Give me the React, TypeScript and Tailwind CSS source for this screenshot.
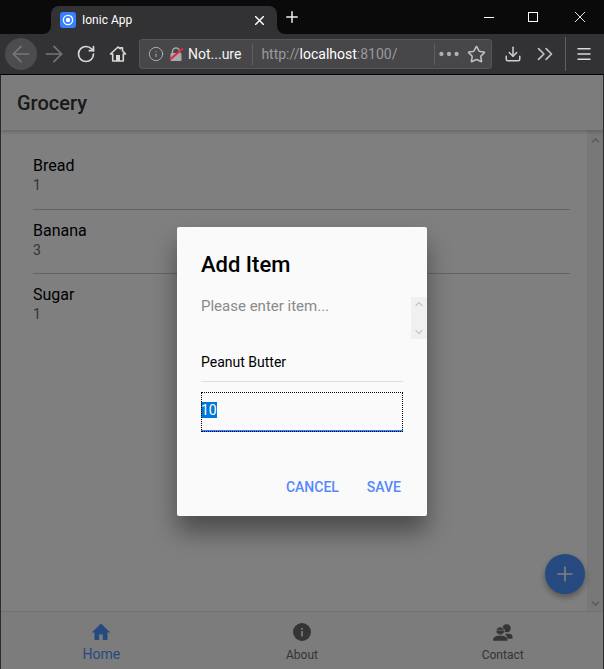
import { ArrowLeft, ArrowRight, RotateCw, Info, Ellipsis, Star, Download, ChevronsRight, Menu, Plus, ChevronUp, ChevronDown } from "lucide-react";

const items = [
  { name: "Bread", qty: 1 },
  { name: "Banana", qty: 3 },
  { name: "Sugar", qty: 1 },
];

const IonicLogo = () => (
  <div className="flex h-4 w-4 items-center justify-center rounded-[3px] bg-[#3880ff]">
    <svg width="12" height="12" viewBox="0 0 12 12">
      <circle cx="6" cy="6" r="4.6" fill="none" stroke="#fff" strokeWidth="1.3" />
      <circle cx="6" cy="6" r="2.2" fill="#fff" />
      <circle cx="9.4" cy="2.7" r="0.9" fill="#fff" />
    </svg>
  </div>
);

const CloseGlyph = ({ size, width, className }: { size: number; width: number; className?: string }) => (
  <svg width={size} height={size} viewBox="0 0 10 10" className={className}>
    <path d="M0 0 10 10M10 0 0 10" stroke="#fff" strokeWidth={width} fill="none" />
  </svg>
);

const BrowserChrome = () => (
  <>
    <div className="flex h-[34px] items-end bg-[#0a0a0a]">
      <div className="relative ml-[51px] flex h-[28px] w-[226px] items-center rounded-t-[8px] bg-[#323234] pl-[9px] pr-[13px]">
        {/* flared tab corners */}
        <div className="absolute bottom-0 left-[-8px] h-[8px] w-[8px] bg-[#323234]">
          <div className="h-full w-full rounded-br-[8px] bg-[#0a0a0a]" />
        </div>
        <div className="absolute bottom-0 right-[-8px] h-[8px] w-[8px] bg-[#323234]">
          <div className="h-full w-full rounded-bl-[8px] bg-[#0a0a0a]" />
        </div>
        <IonicLogo />
        <span className="ml-[6px] flex-1 text-[12px] text-white">Ionic App</span>
        <CloseGlyph size={9} width={1.6} />
      </div>
      <Plus size={18} strokeWidth={2} className="mb-[8px] ml-[6px] text-[#eee]" />
      <div className="ml-auto mb-[12px] flex items-center">
        <div className="mr-[34px] h-px w-[10px] bg-white" />
        <div className="mr-[37px] h-[10px] w-[10px] border border-white" />
        <CloseGlyph size={10} width={0.9} className="mr-[19px]" />
      </div>
    </div>
    <div className="flex h-[41px] items-center border-b border-black bg-[#323234] pl-[5px]">
      <div className="flex h-[32px] w-[32px] items-center justify-center rounded-full bg-[#4c4c4e]">
        <ArrowLeft size={26} strokeWidth={1.5} className="text-[#77777a]" />
      </div>
      <ArrowRight size={26} strokeWidth={1.5} className="ml-[4px] text-[#77777a]" />
      <RotateCw size={20} strokeWidth={2} className="ml-[9px] text-[#d8d8d8]" />
      <svg width="18" height="18" viewBox="0 0 18 18" className="ml-[13px] text-[#d8d8d8]">
        <path d="M9 2 1.500 9h2.200v7h10.600V9h2.200L13.500 5.700V2.800h-2v1z" fill="none" stroke="currentColor" strokeWidth="1.600" strokeLinejoin="round" />
        <rect x="7" y="10" width="4" height="6" fill="currentColor" />
      </svg>
      <div className="ml-[12px] flex h-[30px] w-[353px] items-center rounded-[3px] border border-[#55555a] bg-[#474749] pl-[8px] text-[14px]">
        <Info size={16} strokeWidth={1.3} className="text-[#bbb]" />
        <div className="relative ml-[5px] h-[14px] w-[14px]">
          <svg width="14" height="14" viewBox="0 0 14 14">
            <path d="M3.500 6V4.500a3.500 3.500 0 0 1 7 0V6" fill="none" stroke="#aaa" strokeWidth="1.500" />
            <rect x="1.500" y="6" width="11" height="8" rx="1" fill="#aaa" />
          </svg>
          <div className="absolute left-[-1px] top-[6px] h-[2px] w-[17px] -rotate-[40deg] bg-[#e22850]" />
        </div>
        <span className="ml-[5px] text-[#f4f4f4]">Not...ure</span>
        <div className="ml-[11px] h-[21px] w-px bg-[#5f5f63]" />
        <span className="ml-[8px] flex-1 text-[#9a9a9c]">
          http://<span className="text-white">localhost</span>:8100/
        </span>
        <div className="h-[21px] w-px bg-[#5f5f63]" />
        <Ellipsis size={26} strokeWidth={2} className="ml-[1px] text-[#b0b0b0]" />
        <Star size={19} strokeWidth={2} className="ml-[5px] mr-[5px] text-[#c0c0c0]" />
      </div>
      <Download size={18} strokeWidth={2} className="ml-[12px] text-[#d0d0d0]" />
      <ChevronsRight size={26} strokeWidth={1.6} className="ml-[10px] text-[#c0c0c0]" />
      <div className="ml-[7px] h-[34px] w-px bg-[#5f5f63]" />
      <Menu size={18} strokeWidth={2} className="ml-[9px] text-[#d8d8d8]" />
    </div>
  </>
);

const TabButton = ({ label, active, children }: { label: string; active?: boolean; children: React.ReactNode }) => (
  <div className={`flex flex-1 flex-col items-center ${active ? "text-[#4d94ff]" : "text-[#6a6a6a]"}`}>
    <div className="flex h-[29px] items-center">{children}</div>
    <span className={active ? "-mt-px text-[14px] leading-[18px]" : "text-[12px] leading-[18px]"}>{label}</span>
  </div>
);

export default function App() {
  return (
    <div className="flex h-[669px] w-[604px] flex-col overflow-hidden font-['Roboto',sans-serif]">
      <BrowserChrome />
      <div className="relative flex min-h-0 flex-1 flex-col border-x border-[#2c2c2c] bg-white">
        <div className="z-10 flex h-[55px] items-center bg-[#f8f8f8] pl-[16px] shadow-[0_2px_4px_rgba(0,0,0,0.2)]">
          <h1 className="text-[20px] font-medium text-[#333]">Grocery</h1>
        </div>
        <div className="flex min-h-0 flex-1 bg-white">
          <div className="flex-1 pl-[32px] pr-[17px] pt-[15px]">
            {items.map((item, i) => (
              <div key={item.name} className={`h-[64.5px] pt-[11px] ${i < items.length - 1 ? "border-b border-[#c8c8c8]" : ""}`}>
                <div className="text-[16px] leading-[19px] text-black">{item.name}</div>
                <div className="mt-[2px] text-[14px] leading-[17px] text-[#666]">{item.qty}</div>
              </div>
            ))}
          </div>
          <div className="flex w-[16px] flex-col items-center justify-between bg-[#f0f0f0] pb-[1px] pt-[4px] text-[#a0a0a0]">
            <ChevronUp size={13} strokeWidth={2} />
            <ChevronDown size={13} strokeWidth={2} />
          </div>
        </div>
        <div className="flex h-[58px] items-start border-t border-[#e0e0e0] bg-[#f8f8f8] pt-[5px]">
          <TabButton label="Home" active>
            <svg width="20" height="20" viewBox="0 0 20 20" fill="currentColor"><path d="M10 1.500 0.800 10.400h2.700V18h4.700v-5.500h3.600V18h4.700v-7.600h2.700z" /></svg>
          </TabButton>
          <TabButton label="About">
            <svg width="18" height="20" viewBox="0 0 20 20"><circle cx="10" cy="10" r="10" fill="currentColor" /><rect x="9" y="9" width="2" height="6" fill="#eee" /><rect x="9" y="5.500" width="2" height="2" fill="#eee" /></svg>
          </TabButton>
          <TabButton label="Contact">
            <svg width="20" height="20" viewBox="0 0 22 20" fill="currentColor"><circle cx="15" cy="6" r="4.400" /><path d="M13 12h5c2 0 3.500 1.500 3.500 4v1.500H16c-.5-2.500-1.500-4-3-5.500z" /><circle cx="8" cy="9" r="4.600" stroke="#f8f8f8" strokeWidth="0.800" /><path d="M3 8h10M4 11.500c2 1.500 6 1.500 8 0" stroke="#f8f8f8" strokeWidth="0.700" fill="none" /><path d="M0 19.500c0-4 2.500-5.500 8-5.500s8 1.500 8 5.500z" /></svg>
          </TabButton>
        </div>
        <button className="absolute bottom-[75px] right-[18px] z-10 flex h-[40px] w-[40px] items-center justify-center rounded-full bg-[#4d94ff] text-white shadow-[0_3px_6px_rgba(0,0,0,0.35)]">
          <Plus size={24} strokeWidth={1.6} />
        </button>
        <div className="absolute inset-0 z-20 flex items-start justify-center bg-black/50 pt-[152px]">
          <div className="flex h-[289px] w-[250px] flex-col rounded-[2px] bg-[#fafafa] shadow-[0_16px_24px_rgba(0,0,0,0.4)]">
            <h2 className="pl-[24px] pt-[25px] text-[22px] font-medium leading-[26px] text-black">Add Item</h2>
            <div className="mt-[19px] flex h-[42px]">
              <p className="flex-1 pl-[24px] pt-px text-[15px] leading-[17px] text-[#8a8a8a]">Please enter item...</p>
              <div className="flex w-[16px] flex-col items-center justify-between bg-[#f0f0f0] py-[1px] text-[#c8c8c8]">
                <ChevronUp size={12} strokeWidth={2.4} />
                <ChevronDown size={12} strokeWidth={2.4} />
              </div>
            </div>
            <div className="mx-[24px] mt-[13px] flex h-[30px] items-center border-b border-[#dedede] pb-[8px] text-[14px] text-black">Peanut Butter</div>
            <div className="mx-[24px] mt-[10px] h-[40px] border-b-2 border-[#3880ff] pt-[10px] text-[14px] leading-[16px] outline-1 -outline-offset-1 outline-black outline-dotted">
              <span className="bg-[#0078d7] text-white">10</span>
            </div>
            <div className="mt-auto flex justify-end gap-[28px] pb-[18px] pr-[26px] text-[14px] font-medium text-[#5588ff]">
              <span>CANCEL</span>
              <span>SAVE</span>
            </div>
          </div>
        </div>
      </div>
    </div>
  );
}
